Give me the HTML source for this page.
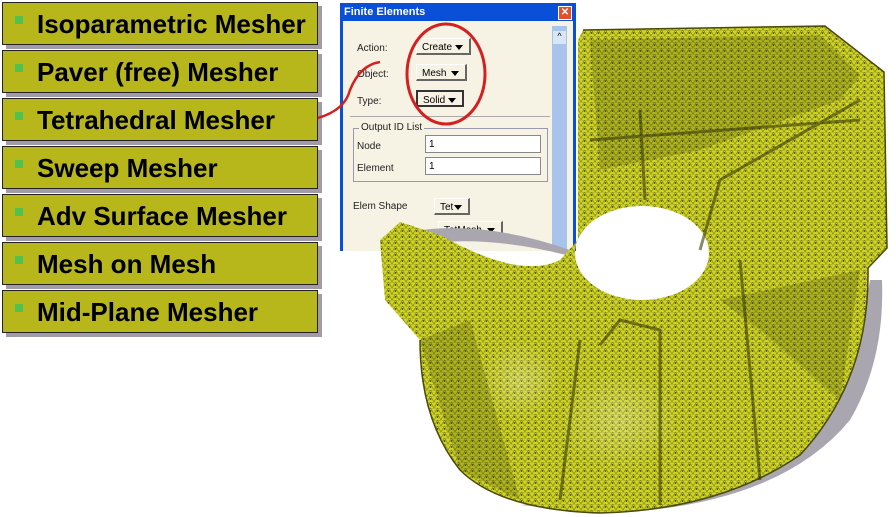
<!DOCTYPE html>
<html><head><meta charset="utf-8"><style>
body{margin:0;width:896px;height:517px;background:#fff;position:relative;overflow:hidden;font-family:"Liberation Sans",sans-serif}
.b{position:absolute;left:2px;width:314px;height:41px;background:#b7b71b;border:1px solid #222;box-shadow:4px 4px 0 #a39aa8}
.b span{position:absolute;left:34px;top:6px;font-weight:bold;font-size:26px;color:#000;white-space:nowrap}
.b i{position:absolute;left:12px;top:13px;width:8px;height:8px;background:#4fc24f}
.dlg{position:absolute;left:340px;top:3px;width:236px;height:248px;background:#0a4fd8;}
.in{position:absolute;left:3px;top:18px;width:230px;height:230px;background:#f6f3e4}
.t{position:absolute;left:4px;top:3px;color:#fff;font-weight:bold;font-size:11px}
.x{position:absolute;right:4px;top:3px;width:12px;height:12px;background:#e0502a;border:1px solid #fff;color:#fff;font-size:10px;line-height:12px;text-align:center;font-weight:bold}
.l{position:absolute;font-size:10px;color:#222}
.dd{position:absolute;height:17px;background:#f6f3e4;border-right:2px solid #666;border-bottom:2px solid #666;border-top:1px solid #fff;border-left:1px solid #fff;font-size:10px;line-height:17px;padding-left:5px;box-sizing:border-box}
.dd:after{content:"";position:absolute;right:6px;top:6px;border:4px solid transparent;border-top:5px solid #000}
.tb{position:absolute;height:18px;background:#fff;border:1px solid #888;font-size:10px;line-height:18px;padding-left:3px;box-sizing:border-box}
</style></head><body>
<div class="b" style="top:2px"><i></i><span>Isoparametric Mesher</span></div>
<div class="b" style="top:50px"><i></i><span>Paver (free) Mesher</span></div>
<div class="b" style="top:98px"><i></i><span>Tetrahedral Mesher</span></div>
<div class="b" style="top:146px"><i></i><span>Sweep Mesher</span></div>
<div class="b" style="top:194px"><i></i><span>Adv Surface Mesher</span></div>
<div class="b" style="top:242px"><i></i><span>Mesh on Mesh</span></div>
<div class="b" style="top:290px"><i></i><span>Mid-Plane Mesher</span></div>

<div class="dlg"><div class="t">Finite Elements</div><div class="x">✕</div>
<div class="in">
<div class="l" style="left:14px;top:22px">Action:</div>
<div class="dd" style="left:73px;top:17px;width:55px">Create</div>
<div class="l" style="left:14px;top:48px">Object:</div>
<div class="dd" style="left:73px;top:43px;width:51px">Mesh</div>
<div class="l" style="left:14px;top:75px">Type:</div>
<div class="dd" style="left:73px;top:69px;width:48px;border:2px solid #333">Solid</div>
<div style="position:absolute;left:7px;top:95px;width:200px;border-top:1px solid #aaa"></div>
<div style="position:absolute;left:10px;top:107px;width:193px;height:52px;border:1px solid #99a"></div>
<div class="l" style="left:16px;top:101px;background:#f6f3e4;padding:0 2px">Output ID List</div>
<div class="l" style="left:14px;top:120px">Node</div>
<div class="tb" style="left:82px;top:114px;width:116px">1</div>
<div class="l" style="left:14px;top:142px">Element</div>
<div class="tb" style="left:82px;top:136px;width:116px">1</div>
<div class="l" style="left:10px;top:180px">Elem Shape</div>
<div class="dd" style="left:91px;top:177px;width:36px">Tet</div>
<div class="dd" style="left:95px;top:200px;width:65px">TetMesh</div>
<div style="position:absolute;left:209px;top:5px;width:15px;height:225px;background:#a8c4ec"></div>
<div style="position:absolute;left:210px;top:10px;width:13px;height:13px;background:#d8e6f8;font-size:9px;text-align:center">^</div>
</div></div>

<svg style="position:absolute;left:0;top:0" width="896" height="517">
<defs>
<pattern id="m" width="7" height="6" patternUnits="userSpaceOnUse">
<rect width="7" height="6" fill="#cdd424"/>
<path d="M0 6L3.5 0L7 6M0 0h7" stroke="#7a7a18" stroke-width="0.6" fill="none"/>
<circle cx="3.5" cy="3" r="0.9" fill="#3d3d0a"/>
</pattern>
<radialGradient id="sh"><stop offset="0" stop-color="#fff" stop-opacity="0.25"/><stop offset="1" stop-color="#fff" stop-opacity="0"/></radialGradient>
</defs>
<path d="M612 513 Q780 505 850 420 Q885 360 882 280 L870 280 Q850 420 720 470 Q620 500 520 505 Z" fill="#a9a6b0"/>
<path d="M390 236 Q470 215 570 250 L570 256 Q470 230 394 250 Z" fill="#a9a6b0"/>
<path fill-rule="evenodd" fill="url(#m)" d="M583 30 L825 26 L884 72 L887 248 L868 268 Q870 380 800 455 Q720 510 600 513 Q500 510 460 470 Q420 420 420 340 L385 300 L380 240 L400 222 L440 235 Q520 280 560 260 L578 240 L578 40 Z M575 253 A67 47 0 1 0 709 253 A67 47 0 1 0 575 253 Z"/>
<g fill="#2e300a" opacity="0.2">
<path d="M590 40 L820 35 L860 75 L840 100 L700 150 L600 170 Z"/>
<path d="M420 340 L460 470 L520 500 L470 320 Z"/>
<path d="M720 300 L860 270 L840 400 L760 330 Z"/>
</g>
<ellipse cx="620" cy="420" rx="60" ry="50" fill="url(#sh)"/>
<ellipse cx="520" cy="380" rx="40" ry="40" fill="url(#sh)"/>
<path d="M583 30 L825 26 L884 72 L887 248 L868 268 Q870 380 800 455 Q720 510 600 513 Q500 510 460 470 Q420 420 420 340" fill="none" stroke="#4a4a0a" stroke-width="1.5"/>
<path d="M600 345 L620 320 L660 330 L660 505 M580 340 L560 500 M740 260 L760 480 M700 250 L720 180 L860 100 M640 110 L645 200 M590 140 L860 120" stroke="#3a3a0a" stroke-width="3" fill="none" opacity="0.6"/>
<path d="M318 118 Q345 110 350 90 Q360 65 380 62" stroke="#d42020" stroke-width="2.5" fill="none"/>
<ellipse cx="446" cy="74" rx="39" ry="50" stroke="#d42020" stroke-width="3" fill="none"/>
</svg>
</body></html>
